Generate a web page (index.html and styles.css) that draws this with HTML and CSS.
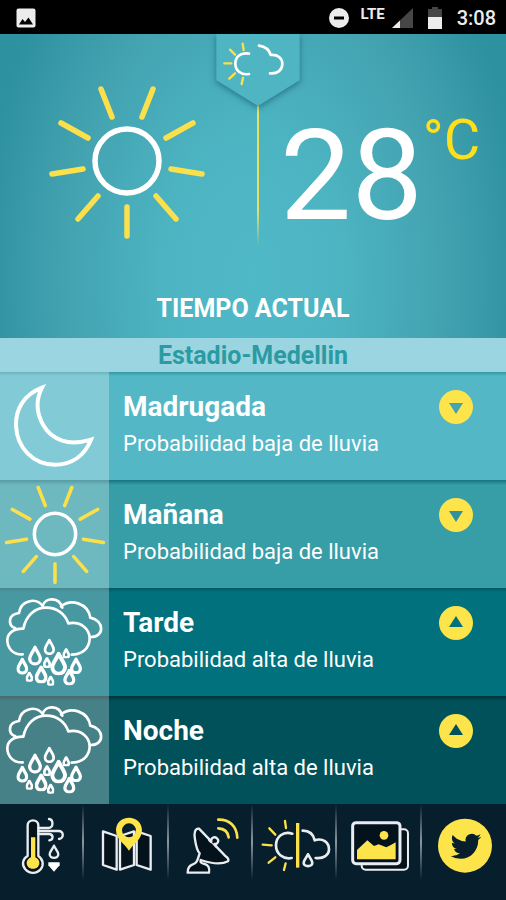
FILE: index.html
```html
<!DOCTYPE html>
<html lang="es">
<head>
    <meta charset="UTF-8">
    <meta name="viewport" content="width=device-width, initial-scale=1.0">
    <title>Tiempo actual</title>
    <link rel="stylesheet" href="styles.css">
</head>
<body>
    <!-- shared icons -->
    <svg class="sprites" aria-hidden="true">
        <symbol id="sun" viewBox="-79 -79 158 158">
            <circle class="white" cx="0" cy="0" r="32" stroke-width="5.5"/>
            <path class="yellow" stroke-width="5.5" d="M0 46V75M-26 -72L-15 -44M26 -72L15 -44M-66 -38L-39 -23M66 -38L39 -23M-75 13L-44 8M75 13L44 8M-49 58L-29 35M49 58L29 35"/>
        </symbol>
        <symbol id="drop" viewBox="-22 -30 44 60">
            <path d="M0 -24C5 -12 16 0 16 10A16 16 0 0 1 -16 10C-16 0 -5 -12 0 -24Z"/>
        </symbol>
        <symbol id="rain" viewBox="0 9 327 324">
            <g class="white" stroke-width="8">
                <path d="M68 208C40 210 22 190 22 166C22 144 42 130 70 131C78 92 104 68 139 68C170 68 195 86 205 115C245 108 269 134 269 160C269 190 246 209 215 209"/>
                <path d="M46 130C22 120 24 88 57 84C61 48 107 34 129 64"/>
                <path d="M128 62C136 36 178 36 187 68"/>
                <path d="M183 64C214 40 264 55 271 98C314 106 314 157 272 156"/>
            </g>
            <g class="white" stroke-width="10">
                <use href="#drop" x="83" y="180" width="44" height="62"/>
                <use href="#drop" x="149" y="199" width="54" height="72"/>
                <use href="#drop" x="130" y="160" width="36" height="50"/>
            </g>
            <g class="white" stroke-width="12">
                <use href="#drop" x="49" y="217" width="36" height="52"/>
                <use href="#drop" x="210" y="217" width="36" height="50"/>
                <use href="#drop" x="104" y="241" width="39" height="54"/>
                <use href="#drop" x="189" y="251" width="38" height="50"/>
            </g>
            <g class="white" stroke-width="16">
                <use href="#drop" x="129" y="217" width="24" height="32"/>
                <use href="#drop" x="187" y="190" width="23" height="30"/>
                <use href="#drop" x="77" y="260" width="22" height="30"/>
                <use href="#drop" x="141" y="272" width="22" height="30"/>
            </g>
        </symbol>
    </svg>

    <div class="app">
        <header class="status-bar">
            <svg class="status-picture" viewBox="0 0 20 20" width="20" height="20">
                <rect x="0.5" y="0.5" width="19" height="19" rx="2"/>
                <path class="hole" d="M3 16.500L6.500 11L9 14L12.500 9.500L17 16.500Z"/>
            </svg>
            <div class="status-right">
                <svg viewBox="0 0 20 20" width="20" height="20">
                    <circle cx="10" cy="10" r="10"/>
                    <rect class="hole" x="5" y="8.500" width="10" height="3"/>
                </svg>
                <span class="lte">LTE</span>
                <svg class="signal" viewBox="0 0 21 20" width="21" height="20">
                    <path class="dim" d="M21 0V20H0Z"/>
                    <path d="M8 12.500V20H0Z"/>
                </svg>
                <svg class="battery" viewBox="0 0 14 22" width="14" height="22">
                    <path class="dim" d="M4 0H10V2H14V22H0V2H4Z"/>
                    <rect x="0" y="10" width="14" height="12"/>
                </svg>
                <time>3:08</time>
            </div>
        </header>

        <section class="current">
            <div class="current-top">
                <div class="current-icon">
                    <svg width="158" height="158"><use href="#sun"/></svg>
                </div>
                <div class="divider">
                    <button class="badge" aria-label="Pronóstico">
                        <svg viewBox="50 12 250 216" width="84" height="72">
                            <path class="badge-shape" d="M50 12H300V151L175 228L50 151Z"/>
                            <g class="white" stroke-width="8">
                                <path d="M148 71C120 66 107 82 107 101C107 120 122 136 148 132"/>
                                <path d="M178 47C198 50 209 60 213 75C234 73 248 84 248 102C248 120 234 132 211 130"/>
                            </g>
                            <path class="yellow" stroke-width="7" d="M129 41L132 60M91 59L106 74M74 100H95M89 146L106 130M126 162L130 143"/>
                        </svg>
                    </button>
                    <div class="line"></div>
                </div>
                <div class="temperature">
                    <span class="degrees">28</span><span class="unit">°C</span>
                </div>
            </div>
            <h1>TIEMPO ACTUAL</h1>
        </section>

        <h2 class="location">Estadio-Medellin</h2>

        <main class="forecast">
            <article class="row dawn">
                <div class="row-icon">
                    <svg viewBox="0 6 327 324" width="109" height="108">
                        <path class="white moon" stroke-width="12" d="M126 53C72 74 46 117 48 168C51 234 101 284 164 284C216 284 254 256 273 209C207 229 156 211 130 166C110 131 107 90 126 53Z"/>
                    </svg>
                </div>
                <div class="row-text">
                    <h3>Madrugada</h3>
                    <p>Probabilidad baja de lluvia</p>
                </div>
                <button class="toggle" aria-label="Ver Madrugada">
                    <svg viewBox="0 0 34 34" width="34" height="34"><path d="M10 13H24L17 24Z"/></svg>
                </button>
            </article>
            <article class="row morning">
                <div class="row-icon">
                    <svg width="102" height="102"><use href="#sun"/></svg>
                </div>
                <div class="row-text">
                    <h3>Mañana</h3>
                    <p>Probabilidad baja de lluvia</p>
                </div>
                <button class="toggle" aria-label="Ver Mañana">
                    <svg viewBox="0 0 34 34" width="34" height="34"><path d="M10 13H24L17 24Z"/></svg>
                </button>
            </article>
            <article class="row afternoon">
                <div class="row-icon">
                    <svg width="109" height="108"><use href="#rain"/></svg>
                </div>
                <div class="row-text">
                    <h3>Tarde</h3>
                    <p>Probabilidad alta de lluvia</p>
                </div>
                <button class="toggle" aria-label="Ver Tarde">
                    <svg viewBox="0 0 34 34" width="34" height="34"><path d="M10 21H24L17 10Z"/></svg>
                </button>
            </article>
            <article class="row night">
                <div class="row-icon">
                    <svg width="109" height="108"><use href="#rain"/></svg>
                </div>
                <div class="row-text">
                    <h3>Noche</h3>
                    <p>Probabilidad alta de lluvia</p>
                </div>
                <button class="toggle" aria-label="Ver Noche">
                    <svg viewBox="0 0 34 34" width="34" height="34"><path d="M10 21H24L17 10Z"/></svg>
                </button>
            </article>
        </main>

        <nav class="tabs">
            <a href="#variables" aria-label="Variables">
                <svg viewBox="0 12 253 228">
                    <path class="white inner" stroke-width="7" d="M83 168V76C83 56 115 56 115 76V168C130 178 132 196 122 208C110 222 88 222 76 208C64 194 68 176 83 168Z"/>
                    <path class="yellow-fill" d="M93 112H106V172C120 178 121 193 114 200C106 209 91 208 84 200C77 191 79 178 93 172Z"/>
                    <g class="white" stroke-width="7">
                        <path d="M115 84H146C162 82 160 58 147 57"/>
                        <path d="M115 93H175C193 92 192 116 177 117"/>
                        <path d="M115 102H148C162 104 160 120 148 121"/>
                        <path d="M162 137C166 147 175 155 175 163C175 177 149 177 149 163C149 155 158 147 162 137Z"/>
                    </g>
                    <path class="white-fill" d="M145 187H179V196L162 215L145 196Z"/>
                </svg>
            </a>
            <a href="#mapa" aria-label="Mapa">
                <svg viewBox="253 12 253 228">
                    <g class="white inner" stroke-width="7">
                        <path d="M310 94L351 108V209L310 195Z"/>
                        <path d="M361 108L403 94V195L361 209Z"/>
                        <path d="M411 94L453 108V209L411 195Z"/>
                    </g>
                    <path class="yellow-fill" fill-rule="evenodd" d="M388 152C375 132 349 118 349 91C349 68 366 53 388 53C410 53 427 68 427 91C427 118 401 132 388 152ZM388 70A21 21 0 0 0 388 112A21 21 0 0 0 388 70Z"/>
                </svg>
            </a>
            <a href="#radar" aria-label="Radar">
                <svg viewBox="506 12 253 228">
                    <g class="white inner" stroke-width="7">
                        <path d="M596 86C584 84 580 100 584 118C587 139 589 150 598 160C592 180 590 190 576 194C565 198 562 205 562 218H626C629 204 623 194 613 192C602 190 599 186 601 180C631 190 664 194 683 184C687 178 680 171 674 167Z"/>
                        <path d="M627 121L633 126C630 114 642 108 650 115C658 122 652 133 642 132L647 139"/>
                    </g>
                    <path class="yellow" stroke-width="8" d="M654 85C672 86 683 96 685 112M654 59C688 58 709 79 711 113"/>
                </svg>
            </a>
            <a href="#pronostico" aria-label="Pronóstico">
                <svg viewBox="0 12 253 228">
                    <g class="white" stroke-width="8">
                        <path d="M118 101C90 93 69 110 69 136C69 162 91 179 116 174"/>
                        <path d="M149 92C168 92 181 102 185 121C209 113 228 127 228 148C228 165 212 177 188 174"/>
                        <path d="M165 163C170 174 178 180 178 188C178 202 152 202 152 188C152 180 160 174 165 163Z"/>
                    </g>
                    <path class="yellow" stroke-width="7" d="M96 63L99 84M49 85L67 104M29 134L56 136M47 188L67 172M93 210L98 190"/>
                    <path class="yellow bar" stroke-width="10" d="M134 69V203"/>
                </svg>
            </a>
            <a href="#imagenes" aria-label="Imágenes">
                <svg viewBox="253 12 253 228">
                    <rect class="white inner" x="327" y="88" width="139" height="121" rx="12" stroke-width="6"/>
                    <rect class="white inner" x="300" y="68" width="142" height="123" rx="10" stroke-width="9"/>
                    <circle class="yellow-fill" cx="394" cy="106" r="13"/>
                    <path class="yellow-fill" d="M313 178V150L344 121L364 138L378 133L401 142L416 134L429 127V178Z"/>
                </svg>
            </a>
            <a href="#twitter" aria-label="Twitter">
                <svg viewBox="506 12 253 228">
                    <circle class="yellow-fill" cx="635" cy="137" r="81"/>
                    <svg x="592" y="93" width="92" height="92" viewBox="0 0 24 24">
                        <path class="bird" d="M23.950 4.570a10 10 0 0 1-2.820.770 4.960 4.960 0 0 0 2.160-2.720c-.950.550-2 .950-3.120 1.180a4.920 4.920 0 0 0-8.380 4.480C7.690 8.090 4.070 6.130 1.640 3.160a4.820 4.820 0 0 0-.670 2.470c0 1.710.870 3.210 2.190 4.100a4.900 4.900 0 0 1-2.230-.620v.060a4.920 4.920 0 0 0 3.950 4.830 5 5 0 0 1-2.210.080 4.940 4.940 0 0 0 4.600 3.420A9.870 9.870 0 0 1 0 19.540a13.990 13.990 0 0 0 7.550 2.210c9.050 0 14-7.500 14-13.980 0-.210 0-.420-.020-.630a9.940 9.940 0 0 0 2.460-2.550z"/>
                    </svg>
                </svg>
            </a>
        </nav>
    </div>
</body>
</html>
```
FILE: styles.css
```css
* {
    box-sizing: border-box;
}

body {
    margin: 0;
    font-family: Roboto, "Liberation Sans", sans-serif;
    color: white;
    background-color: #071e2d;
}

h1, h2, h3, p {
    margin: 0;
}

button {
    padding: 0;
    border: none;
    background: none;
    cursor: pointer;
}

svg {
    display: block;
}

.sprites {
    position: absolute;
    width: 0;
    height: 0;
}

.white, .yellow {
    fill: none;
    stroke-linecap: round;
    stroke-linejoin: round;
}

.white {
    stroke: white;
}

.yellow {
    stroke: #fbe04c;
}

.white-fill {
    fill: white;
}

.yellow-fill {
    fill: #fde44a;
}

.app {
    display: flex;
    flex-direction: column;
    min-height: 100vh;
}

/* status bar */
.status-bar {
    display: flex;
    justify-content: space-between;
    align-items: center;
    height: 34px;
    padding: 2px 10px 0 16px;
    background-color: black;
}

.status-bar svg {
    fill: #ececec;
}

.status-bar .hole {
    fill: black;
}

.status-bar .dim {
    fill: #464646;
}

.status-right {
    display: flex;
    align-items: center;
}

.lte {
    margin: 0 7px 9px 11px;
    font-size: 15px;
    line-height: 16px;
    font-weight: 700;
    color: #ececec;
}

.battery {
    margin: 0 15px;
}

.status-right time {
    font-size: 20px;
    line-height: 24px;
    font-weight: 500;
    color: #ececec;
}

/* current weather */
.current {
    height: 304px;
    background: radial-gradient(54% 145% at 50% 80%, #50b9c7 0%, #4cb3c1 35%, #43a2b0 70%, #2e91a0 100%);
    text-align: center;
}

.current-top {
    display: flex;
    align-items: flex-start;
    height: 258px;
}

.current-icon {
    flex: 1;
    display: flex;
    justify-content: flex-end;
    padding: 48px 10px 0 0;
}

.divider {
    display: flex;
    flex-direction: column;
    align-items: center;
    width: 84px;
}

.badge {
    filter: drop-shadow(0 2px 3px rgba(0, 60, 75, 0.5));
}

.badge-shape {
    fill: #50b5c3;
}

.line {
    width: 2px;
    height: 140px;
    background: linear-gradient(#e5e06a, #f0e050 30%, #e5e06a 75%, transparent);
}

.temperature {
    display: flex;
    align-items: flex-start;
    width: 226px;
    margin-left: -20px;
    padding-top: 78px;
}

.degrees {
    font-size: 127px;
    line-height: 127px;
}

.unit {
    font-size: 56px;
    line-height: 56px;
    color: #ffdf1b;
}

.current h1 {
    font-size: 25px;
    line-height: 34px;
    font-weight: 700;
}

.location {
    height: 34px;
    background-color: #9bd5e1;
    color: #2a9ba2;
    font-size: 25px;
    line-height: 36px;
    font-weight: 700;
    text-align: center;
}

/* forecast rows */
.row {
    display: flex;
    align-items: flex-start;
    height: 108px;
}

.dawn {
    background: linear-gradient(#3197a5, #53b7c6 4px);
    color: #42a5b1;
}

.morning {
    background: linear-gradient(#16747f, #379da7 5px);
    color: #2f929c;
}

.afternoon {
    background: linear-gradient(#005663, #00717d 4px);
    color: #00717d;
}

.night {
    background: linear-gradient(#00323b, #00515a 5px);
    color: #00515a;
}

.row-icon {
    display: flex;
    justify-content: center;
    align-items: center;
    width: 109px;
    height: 108px;
    background-color: rgba(255, 255, 255, 0.28);
}

.moon {
    stroke-linejoin: miter;
}

.row-text {
    flex: 1;
    padding: 19px 0 0 14px;
    color: white;
}

.row-text h3 {
    font-size: 28px;
    line-height: 32px;
    font-weight: 700;
}

.row-text p {
    margin-top: 6px;
    font-size: 22px;
    line-height: 30px;
}

.toggle {
    width: 34px;
    height: 34px;
    margin: 18px 33px 0 0;
    border-radius: 50%;
    background-color: #fde44a;
    color: inherit;
}

.toggle svg {
    fill: currentColor;
}

/* bottom tabs */
.tabs {
    display: flex;
    flex: 1;
    background-color: #071e2d;
}

.tabs a {
    flex: 1;
    height: 96px;
    background: linear-gradient(transparent, #8b979f 50%, transparent) no-repeat right top / 2px 76px;
}

.tabs a:last-child {
    background: none;
}

.tabs .white {
    stroke: #e9edf0;
}

.tabs .inner {
    fill: #04121c;
}

.tabs .bar {
    stroke-linecap: butt;
}

.bird {
    fill: #071e2d;
}
```
